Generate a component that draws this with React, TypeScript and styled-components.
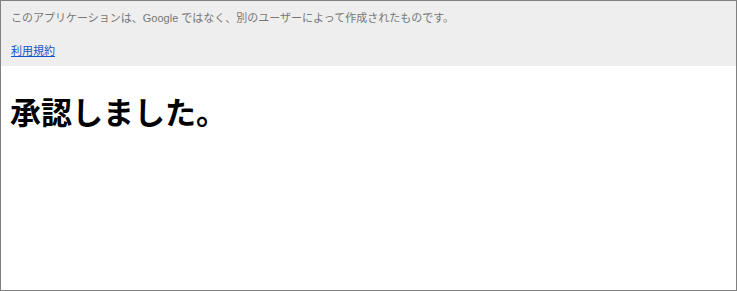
import React from 'react';
import styled, { createGlobalStyle } from 'styled-components';

const GlobalStyle = createGlobalStyle`
  html, body {
    margin: 0;
    padding: 0;
    background: #ffffff;
  }
`;

// Outer frame with thin gray border
const Frame = styled.div`
  box-sizing: border-box;
  width: 737px;
  height: 291px;
  border: 1px solid #808080;
  background: #ffffff;
  font-family: Arial, 'Liberation Sans', 'Noto Sans CJK JP', sans-serif;
`;

// Gray notice band at the top
const Notice = styled.div`
  background: #eeeeee;
  height: 65px;
  padding: 10px 10px 0 10px;
  box-sizing: border-box;
  font-size: 11px;
  line-height: 14px;
  color: #777777;
`;

const NoticeText = styled.p`
  margin: 0 0 19px 0;
`;

const TermsLink = styled.a`
  color: #1155cc;
  text-decoration: underline;
  font-size: 11px;
`;

const Heading = styled.h1`
  margin: 30px 0 0 9px;
  font-size: 31px;
  line-height: 36px;
  font-weight: bold;
  color: #000000;
`;

const App: React.FC = () => {
  return (
    <>
      <GlobalStyle />
      <Frame>
        <Notice>
          <NoticeText>このアプリケーションは、Google ではなく、別のユーザーによって作成されたものです。</NoticeText>
          <TermsLink href="#">利用規約</TermsLink>
        </Notice>
        <Heading>承認しました。</Heading>
      </Frame>
    </>
  );
};

export default App;
